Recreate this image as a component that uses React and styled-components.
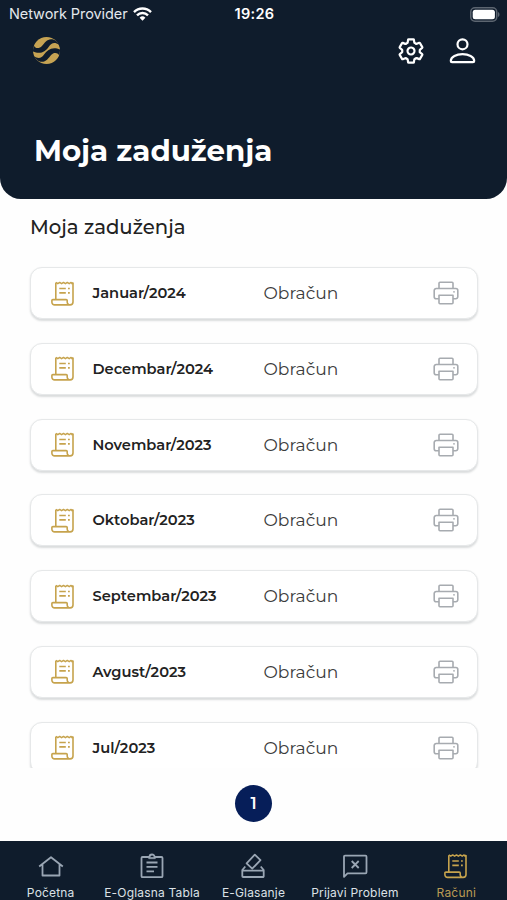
import React from 'react';
import styled, { createGlobalStyle } from 'styled-components';
import { IoSettingsOutline } from 'react-icons/io5';

const GlobalStyle = createGlobalStyle`
    * {
        box-sizing: border-box;
    }
    body {
        margin: 0;
        background-color: #fff;
        font-family: Montserrat, Inter, sans-serif;
    }
`

const Screen = styled.div`
    display: flex;
    flex-direction: column;
    width: 100%;
    height: 900px;
    overflow: hidden;
    background-color: #fefefe;
`

const Header = styled.header`
    height: 198.5px;
    flex-shrink: 0;
    background-color: #0f1c2c;
    border-radius: 0 0 21px 21px;
    color: #fff;
`

const StatusBar = styled.div`
    display: grid;
    grid-template-columns: 1fr auto 1fr;
    align-items: center;
    height: 28px;
    padding: 0 7px 0 9px;
    font-family: Inter, sans-serif;
    font-size: 14.5px;
    line-height: 28px;
    color: #e4e8ec;

    .carrier {
        display: flex;
        align-items: center;
        gap: 5px;
        letter-spacing: -0.07px;
    }

    .time {
        font-weight: 600;
        color: #fff;
        letter-spacing: 0.3px;
    }

    .battery {
        justify-self: end;
    }

    svg {
        display: block;
    }
`

const TopBar = styled.div`
    display: flex;
    align-items: center;
    justify-content: space-between;
    height: 45px;
    padding: 0 31px 0 33px;

    svg {
        display: block;
    }

    .actions {
        display: flex;
        align-items: center;
        gap: 24.5px;
        padding-top: 1px;
    }

    .settings path {
        stroke-width: 40px;
    }
`

const Title = styled.h1`
    margin: 59px 0 0 34px;
    font-size: 29.3px;
    line-height: 38px;
    font-weight: 700;
`

const Subtitle = styled.h2`
    margin: 15px 0 0 30px;
    font-size: 19.7px;
    line-height: 26px;
    font-weight: 550;
    color: #222;
`

const List = styled.div`
    display: flex;
    flex-direction: column;
    gap: 23.75px;
    height: 511.5px;
    flex-shrink: 0;
    margin-top: 17px;
    padding: 10.5px 29.5px 0;
    overflow: hidden;
`

const Card = styled.div`
    display: grid;
    grid-template-columns: 42px 171px 1fr auto;
    align-items: center;
    height: 52px;
    flex-shrink: 0;
    padding: 0 18px 0 20px;
    border: 1px solid #e6e8e9;
    border-radius: 12px;
    background-color: #fff;
    box-shadow: 0 1.5px 2px rgba(30, 45, 50, 0.16);

    svg {
        display: block;
    }
`

const Month = styled.span`
    font-size: 14.65px;
    font-weight: 600;
    color: #222;
`

const Kind = styled.span`
    font-size: 17.1px;
    line-height: 20px;
    font-weight: 400;
    color: #3c3c3c;
`

const Pager = styled.div`
    display: flex;
    align-items: center;
    justify-content: center;
    flex: 1;
    padding-bottom: 2px;
`

const PageButton = styled.button`
    width: 37px;
    height: 37px;
    padding: 0;
    border: none;
    border-radius: 50%;
    background-color: #061e59;
    color: #fff;
    font-family: inherit;
    font-size: 16px;
    font-weight: 600;
`

const TabBar = styled.nav`
    display: grid;
    grid-template-columns: repeat(5, 1fr);
    height: 59.5px;
    flex-shrink: 0;
    background-color: #0f1c2c;
`

const Tab = styled.div`
    display: flex;
    flex-direction: column;
    align-items: center;
    gap: 7px;
    padding-top: 12px;
    font-family: Inter, sans-serif;
    font-size: 12px;
    line-height: 14px;
    letter-spacing: 0.18px;
    white-space: nowrap;
    color: ${props => (props.$active ? '#b99b54' : '#dce1e6')};

    svg {
        display: block;
        height: 26px;
        color: ${props => (props.$active ? '#c6a34d' : '#9aa6b4')};
    }
`

const Gold = styled.span`
    color: #c6a34d;
`

const Gray = styled.span`
    color: #a7abb0;
`

const Icon = ({ w = 26, h = 26, stroke = 1.8, children }) => (
    <svg width={w} height={h} viewBox={`0 0 ${w} ${h}`} fill="none" stroke="currentColor" strokeWidth={stroke} strokeLinejoin="round">
        {children}
    </svg>
)

const WAVE = 'M7 15C7 26 20 31 30 24C41 16 51 6 65 12C73 16 78 24 80 33C70 20 59 22 50 30C38 41 20 49 0 33Z'

const Logo = () => (
    <svg width="27" height="27" viewBox="0 0 80 80">
        <circle cx="40" cy="40" r="40" fill="#c6a353" />
        <g fill="#0f1c2c" transform="rotate(-14 40 40)">
            <path d={WAVE} />
            <path d={WAVE} transform="rotate(180 40 40)" />
        </g>
    </svg>
)

const Wifi = () => (
    <svg width="19" height="14" viewBox="0 0 19 14" fill="none" stroke="#fff" strokeWidth="2.4">
        <path d="M1 5.1a12 12 0 0 1 17 0" />
        <path d="M4 8.3a7.8 7.8 0 0 1 11 0" />
        <path d="M9.5 13.8 6.6 10.8a4.1 4.1 0 0 1 5.8 0z" fill="#fff" stroke="none" />
    </svg>
)

const Battery = () => (
    <svg className="battery" width="30" height="15" viewBox="0 0 30 15">
        <rect x="0.75" y="0.75" width="26" height="13.5" rx="4.2" fill="none" stroke="#5c6570" strokeWidth="1.5" />
        <rect x="2.7" y="2.7" width="22.2" height="9.6" rx="2.5" fill="#fff" />
        <path d="M28 5c2 .8 2 4.2 0 5z" fill="#5c6570" />
    </svg>
)

const Person = () => (
    <Icon w={27} h={28} stroke={2.2}>
        <circle cx="13.5" cy="7.3" r="5" />
        <path d="M3 25.200a1.200 1.200 0 0 1-1.200-1.200C1.800 19.500 7.500 17.200 13.500 17.200S25.200 19.500 25.200 24a1.200 1.200 0 0 1-1.200 1.200z" />
    </Icon>
)

const Receipt = () => (
    <Icon w={24} h={25} stroke={1.6}>
        <path d="M4.800 18.600V1.800M22 1.800V21a2.900 2.900 0 0 1-2.900 2.900H3.600a2.700 2.700 0 0 1-2.700-2.700V19.600a1 1 0 0 1 1-1H15.200a1 1 0 0 1 1 1V21a2.900 2.900 0 0 0 2.900 2.900" />
        <path d="M4.800 1.400l2 1.300 1.900-1.300 1.900 1.300 1.900-1.300 1.900 1.300 1.900-1.300 1.900 1.300 1.900-1.300 1 1.300 1-1.300" strokeWidth="1.400" />
        <path d="M8.300 7.500h6.500M8.300 11.900h6.500M17 7.500h1.800M17 11.900h1.800" />
    </Icon>
)

const Printer = () => (
    <Icon w={26} h={24} stroke={1.6}>
        <path d="M6 7.500V2.200a1 1 0 0 1 1-1h12a1 1 0 0 1 1 1V7.500" />
        <path d="M6 17.700H3.200a2 2 0 0 1-2-2V9.500a2 2 0 0 1 2-2h19.600a2 2 0 0 1 2 2v6.200a2 2 0 0 1-2 2H20" />
        <path d="M6 14.200h14v7.600a1 1 0 0 1-1 1H7a1 1 0 0 1-1-1z" />
        <circle cx="21" cy="10.800" r="0.900" fill="currentColor" stroke="none" />
    </Icon>
)

const House = () => (
    <Icon>
        <path d="M1.200 13.500 13 4.300l11.800 9.200M4.500 11.200v11.300h17V11.200" />
    </Icon>
)

const Clipboard = () => (
    <Icon>
        <path d="M10.500 4H3.500a1 1 0 0 0-1 1v18.200a1 1 0 0 0 1 1h19a1 1 0 0 0 1-1V5a1 1 0 0 0-1-1h-7a2.500 2.500 0 0 0-5 0z" />
        <path d="M9.700 4.500h6.600v1.200H9.700z" fill="currentColor" strokeWidth="0.600" />
        <path d="M7.500 9.500h11M7.500 13.900h11M7.500 18.300h7.500" />
    </Icon>
)

const Ballot = () => (
    <Icon>
        <path d="M14.800 1.700l5.700 5.400-8.300 8.600-5.600-5.400z" />
        <path d="M5.300 13.500 2.300 17v6.200a.8.8 0 0 0 .8.800h19.800a.8.8 0 0 0 .8-.8V17l-3-3.500M2.300 17.600h21.400" />
    </Icon>
)

const Report = () => (
    <Icon>
        <path d="M2 23.800V3.700a1 1 0 0 1 1-1h20.500a1 1 0 0 1 1 1v15.600a1 1 0 0 1-1 1H5.500z" />
        <path d="M9.700 8l7 7M16.700 8l-7 7" />
    </Icon>
)

const months = [
    'Januar/2024',
    'Decembar/2024',
    'Novembar/2023',
    'Oktobar/2023',
    'Septembar/2023',
    'Avgust/2023',
    'Jul/2023',
]

const tabs = [
    { label: 'Početna', icon: <House /> },
    { label: 'E-Oglasna Tabla', icon: <Clipboard /> },
    { label: 'E-Glasanje', icon: <Ballot /> },
    { label: 'Prijavi Problem', icon: <Report /> },
    { label: 'Računi', icon: <Receipt />, active: true },
]

export default function App() {
  return (
    <>
        <GlobalStyle />
        <Screen>
            <Header>
                <StatusBar>
                    <span className="carrier">Network Provider <Wifi /></span>
                    <span className="time">19:26</span>
                    <Battery />
                </StatusBar>
                <TopBar>
                    <Logo />
                    <div className="actions">
                        <IoSettingsOutline className="settings" size={28} />
                        <Person />
                    </div>
                </TopBar>
                <Title>Moja zaduženja</Title>
            </Header>
            <Subtitle>Moja zaduženja</Subtitle>
            <List>
                {months.map(month => (
                    <Card key={month}>
                        <Gold><Receipt /></Gold>
                        <Month>{month}</Month>
                        <Kind>Obračun</Kind>
                        <Gray><Printer /></Gray>
                    </Card>
                ))}
            </List>
            <Pager>
                <PageButton>1</PageButton>
            </Pager>
            <TabBar>
                {tabs.map(tab => (
                    <Tab key={tab.label} $active={tab.active}>
                        {tab.icon}
                        {tab.label}
                    </Tab>
                ))}
            </TabBar>
        </Screen>
    </>
  )
}
